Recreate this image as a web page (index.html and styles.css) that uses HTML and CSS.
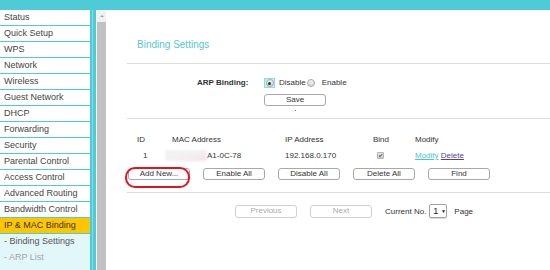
FILE: index.html
```html
<!DOCTYPE html>
<html lang="en">
<head>
  <meta charset="UTF-8">
  <title>IP &amp; MAC Binding</title>
  <meta name="viewport" content="width=device-width, initial-scale=1.0">
  <link rel="stylesheet" href="styles.css">
</head>
<body>
  <div class="topbar"></div>
  <div class="layout">
    <ul class="menu">
      <li>Status</li>
      <li>Quick Setup</li>
      <li>WPS</li>
      <li>Network</li>
      <li>Wireless</li>
      <li>Guest Network</li>
      <li>DHCP</li>
      <li>Forwarding</li>
      <li>Security</li>
      <li>Parental Control</li>
      <li>Access Control</li>
      <li>Advanced Routing</li>
      <li>Bandwidth Control</li>
      <li class="active">IP &amp; MAC Binding</li>
      <li class="sub">- Binding Settings</li>
      <li class="sub dim">- ARP List</li>
    </ul>
    <div class="divider"></div>
    <div class="scroll">
      <div class="scroll-up"><span></span></div>
      <div class="thumb"></div>
    </div>

    <div class="main">
      <h2 class="title">Binding Settings</h2>
      <div class="rule"></div>

      <div class="arp">
        <div class="arp-row">
          <span class="arp-label">ARP Binding:</span>
          <span class="radios">
            <span class="radio-focus"><span class="radio checked"></span></span>
            <span class="radio-text">Disable</span>
            <span class="radio"></span>
            <span class="radio-text enable">Enable</span>
          </span>
        </div>
        <div class="save-wrap">
          <button class="btn">Save</button>
          <span class="dot"></span>
        </div>
      </div>
      <div class="rule"></div>

      <div class="list">
        <div class="grid head">
          <span>ID</span>
          <span>MAC Address</span>
          <span>IP Address</span>
          <span>Bind</span>
          <span>Modify</span>
        </div>
        <div class="grid row">
          <span class="id">1</span>
          <span><span class="blur"></span>A1-0C-78</span>
          <span>192.168.0.170</span>
          <span><span class="check">
            <svg width="7" height="7" viewBox="0 0 7 7"><path d="M1.5 3.6 L3 5 L5.6 1.6" fill="none" stroke="#222" stroke-width="1.2"/></svg>
          </span></span>
          <span><a class="link-modify">Modify</a> <a class="link-delete">Delete</a></span>
        </div>
        <div class="btn-row">
          <button class="btn">Add New...</button>
          <button class="btn">Enable All</button>
          <button class="btn">Disable All</button>
          <button class="btn">Delete All</button>
          <button class="btn">Find</button>
          <div class="mark"></div>
        </div>
      </div>
      <div class="rule"></div>

      <div class="pager">
        <button class="btn off">Previous</button>
        <button class="btn off">Next</button>
        <span class="cur">Current No.</span>
        <span class="select">1 <span class="arrow">&#9660;</span></span>
        <span class="page">Page</span>
      </div>
    </div>
  </div>
</body>
</html>
```

FILE: styles.css
```css
* {
  margin: 0;
  padding: 0;
  box-sizing: border-box;
}
body {
  font-family: 'Liberation Sans', Arial, sans-serif;
  color: #333;
  background: #fff;
  width: 550px;
  height: 270px;
  overflow: hidden;
}
.topbar {
  height: 10px;
  background: #4ecbd6;
}
.layout {
  display: flex;
  height: 260px;
  overflow: hidden;
}

/* left menu */
.menu {
  list-style: none;
  width: 90px;
  flex: none;
  background: #e2f7fa;
}
.menu li {
  height: 16px;
  line-height: 15px;
  border-bottom: 1px solid #4ecbd6;
  padding-left: 4px;
  font-size: 9px;
  color: #444;
  background: #fff;
  white-space: nowrap;
}
.menu li.active {
  background: #ffc600;
  color: #333;
}
.menu li.sub {
  background: #e2f7fa;
  border-bottom: none;
  color: #555;
}
.menu li.dim {
  color: #a5a5a5;
}
.divider {
  width: 6px;
  flex: none;
  margin-right: 1px;
  background: linear-gradient(to right, #4ecbd6 0, #4ecbd6 2px, #86dde5 2px, #86dde5 3px, #4ecbd6 3px);
}
.scroll {
  width: 9px;
  flex: none;
  background: #f1f1f1;
  display: flex;
  flex-direction: column;
}
.scroll-up {
  height: 12px;
  display: flex;
  align-items: center;
  justify-content: center;
}
.scroll-up span {
  width: 0;
  height: 0;
  border-left: 2px solid transparent;
  border-right: 2px solid transparent;
  border-bottom: 2px solid #a3a3a3;
}
.thumb {
  flex: 1;
  background: #c1c1c1;
}

/* content */
.main {
  flex: 1;
  padding-left: 21px;
  font-size: 8px;
}
.title {
  font-size: 10px;
  font-weight: normal;
  line-height: 12px;
  color: #58c6d1;
  margin: 29px 0 12px 10px;
}
.rule {
  height: 1px;
  background: #dcdcdc;
}

.arp {
  padding-top: 13px;
  height: 54px;
}
.arp-row {
  display: grid;
  grid-template-columns: 137px auto;
  line-height: 12px;
  height: 12px;
}
.arp-label {
  font-weight: bold;
  padding-left: 70px;
}
.radios {
  display: flex;
  align-items: center;
}
.radio-focus {
  width: 11px;
  height: 10px;
  background: #c4eef2;
  border: 1px solid #8fdbe3;
  display: flex;
  align-items: center;
  justify-content: center;
}
.radio {
  width: 8px;
  height: 8px;
  border-radius: 50%;
  border: 1px solid #a9a9a9;
  background: linear-gradient(#f4f4f4, #d6d6d6);
  position: relative;
}
.radio.checked::after {
  content: '';
  position: absolute;
  left: 1.5px;
  top: 1.5px;
  width: 3px;
  height: 3px;
  border-radius: 50%;
  background: #333;
}
.radio-text {
  margin: 0 1px 0 4px;
}
.radio-text.enable {
  margin-left: 7px;
}
.save-wrap {
  margin: 5px 0 0 137px;
  width: 62px;
  display: flex;
  flex-direction: column;
  align-items: center;
}
.btn {
  width: 62px;
  height: 12px;
  border: 1px solid #a8a8a8;
  border-radius: 3px;
  background: #fff;
  font-family: 'Liberation Sans', Arial, sans-serif;
  font-size: 8px;
  line-height: 10px;
  color: #333;
}
.dot {
  width: 1px;
  height: 1px;
  background: #777;
  margin-top: 4px;
}

.list {
  padding-top: 15px;
  height: 73px;
}
.grid {
  display: grid;
  grid-template-columns: 35px 113px 88px 42px auto;
  margin-left: 10px;
  line-height: 12px;
  height: 12px;
  white-space: nowrap;
}
.grid.row {
  margin-top: 4px;
}
.id {
  padding-left: 6px;
}
.blur {
  display: inline-block;
  width: 42px;
  height: 11px;
  vertical-align: middle;
  margin-left: -7px;
  background: linear-gradient(165deg, #f2f2f2 45%, #f5e8ec 75%, #f9dde3);
  filter: blur(1.5px);
}
.check {
  display: inline-flex;
  width: 7px;
  height: 7px;
  margin-left: 4px;
  border: 1px solid #b5b5b5;
  border-radius: 1px;
  background: linear-gradient(#e6e6e6, #c8c8c8);
  vertical-align: middle;
  align-items: center;
  justify-content: center;
}
.check svg {
  display: block;
}
.link-modify {
  color: #48c4cf;
  text-decoration: underline;
}
.link-delete {
  color: #5b3d99;
  text-decoration: underline;
}
.btn-row {
  position: relative;
  display: flex;
  gap: 13px;
  margin: 6px 0 0 1px;
}
.mark {
  position: absolute;
  left: -3px;
  top: -1px;
  width: 65px;
  height: 21px;
  border: 2px solid #e3141c;
  border-radius: 10px;
}

.pager {
  display: flex;
  align-items: center;
  gap: 13px;
  padding: 11px 0 0 108px;
}
.btn.off {
  height: 13px;
  border-color: #cfcfcf;
  color: #aaa;
}
.cur {
  margin-right: -10px;
}
.select {
  width: 18px;
  height: 14px;
  border: 1px solid #a0a0a0;
  border-radius: 2px;
  box-shadow: 0 1px 1px rgba(0,0,0,0.15);
  font-size: 9px;
  line-height: 12px;
  padding-left: 3px;
  color: #222;
}
.arrow {
  font-size: 5px;
  vertical-align: 1px;
}
.page {
  margin-left: -6px;
}
```
